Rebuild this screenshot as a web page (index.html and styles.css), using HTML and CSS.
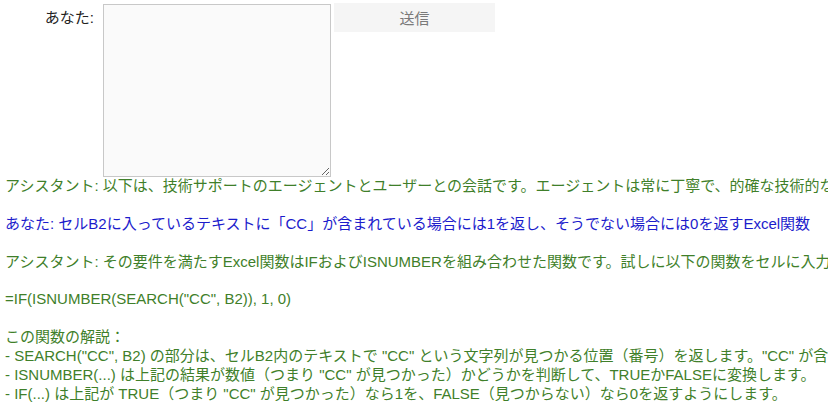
FILE: index.html
```html
<!DOCTYPE html>
<html lang="ja">
<head>
    <meta charset="UTF-8">
    <meta name="viewport" content="width=device-width, initial-scale=1.0">
    <title>サポートチャット</title>
    <link rel="stylesheet" href="styles.css">
</head>
<body>
    <!-- 入力フォーム -->
    <form class="chat-form" onsubmit="return false;">
        <label class="chat-label" for="message">あなた:</label>
        <textarea id="message" class="chat-input"></textarea>
        <button type="submit" class="send-button">送信</button>
    </form>

    <!-- 会話ログ -->
    <div class="chat-log">
        <div class="msg assistant">アシスタント: 以下は、技術サポートのエージェントとユーザーとの会話です。エージェントは常に丁寧で、的確な技術的なアドバイスを提供します。</div>
        <div class="msg user">あなた: セルB2に入っているテキストに「CC」が含まれている場合には1を返し、そうでない場合には0を返すExcel関数</div>
        <div class="msg assistant">アシスタント: その要件を満たすExcel関数はIFおよびISNUMBERを組み合わせた関数です。試しに以下の関数をセルに入力してみてください。

=IF(ISNUMBER(SEARCH("CC", B2)), 1, 0)

この関数の解説：
- SEARCH("CC", B2) の部分は、セルB2内のテキストで "CC" という文字列が見つかる位置（番号）を返します。"CC" が含まれていない場合はエラーになります。
- ISNUMBER(...) は上記の結果が数値（つまり "CC" が見つかった）かどうかを判断して、TRUEかFALSEに変換します。
- IF(...) は上記が TRUE（つまり "CC" が見つかった）なら1を、FALSE（見つからない）なら0を返すようにします。</div>
    </div>
</body>
</html>
```

FILE: styles.css
```css
html, body {
    margin: 0;
    padding: 0;
    overflow: hidden;
}

body {
    font-family: "Liberation Sans", "Noto Sans CJK JP", sans-serif;
    font-size: 15px;
    line-height: 18.9px;
    color: #222;
    background: #fff;
}

.chat-form {
    display: flex;
    align-items: flex-start;
    padding-top: 3px;
}

.chat-label {
    width: 94px;
    margin-top: 6px;
    text-align: right;
}

.chat-input {
    box-sizing: border-box;
    width: 228px;
    height: 173px;
    margin: 1px 0 0 9px;
    border: 1px solid #c8c8c8;
    background-color: #fafafa;
    font: inherit;
}

.send-button {
    width: 161px;
    height: 29px;
    margin-left: 3px;
    border: none;
    background-color: #f5f5f5;
    color: #7a7a7a;
    font-family: inherit;
    font-size: 15px;
    cursor: pointer;
}

.chat-log {
    padding-left: 5px;
    overflow: hidden;
}

.msg {
    white-space: pre;
    margin-bottom: 18.9px;
}

.msg.assistant {
    color: #3f7f2a; /* 緑 */
}

.msg.user {
    color: #1c1ccc; /* 青 */
}
```
